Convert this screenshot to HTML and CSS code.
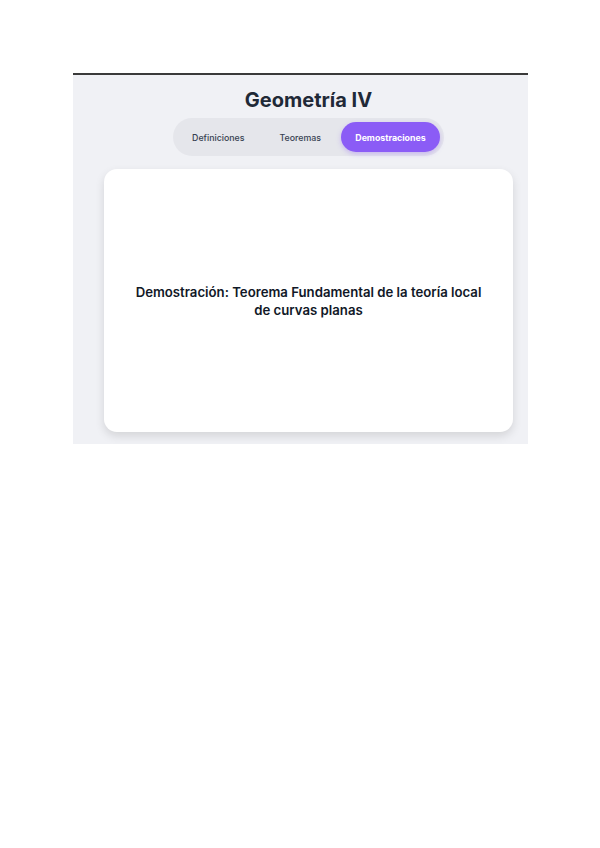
FILE: index.html
```html
<!DOCTYPE html>
<html lang="es">
<head>
  <meta charset="UTF-8">
  <title>Geometría IV</title>
  <link rel="stylesheet" href="styles.css">
</head>
<body>
  <div class="page">
    <div class="frame">
      <!-- HEADER -->
      <h1 class="title">Geometría IV</h1>
      <div class="tabs">
        <button class="tab">Definiciones</button>
        <button class="tab">Teoremas</button>
        <button class="tab tab-active">Demostraciones</button>
      </div>
      <!-- CONTENT -->
      <div class="card">
        <h2>Demostración: Teorema Fundamental de la teoría local de curvas planas</h2>
      </div>
    </div>
  </div>
</body>
</html>
```

FILE: styles.css
```css
*{
  padding: 0;
  margin: 0;
  box-sizing: border-box;
  font-family: Inter, "Noto Sans", sans-serif;
}
body {
  background: #fff;
}
.page {
  padding-top: 73px;
  padding-left: 73px;
}
.frame {
  width: 455px;
  height: 371px;
  border-top: 2px solid #3a3a3a;
  background: #f0f1f5;
  padding: 11px 15px 12px 31px;
  display: flex;
  flex-direction: column;
  align-items: center;
}
.title {
  font-size: 20px;
  line-height: 28px;
  font-weight: 700;
  color: #1f2937;
}
.tabs {
  display: flex;
  align-items: center;
  margin-top: 4px;
  padding: 4px;
  background: #e5e6eb;
  border-radius: 19px;
}
.tab {
  border: none;
  background: none;
  height: 30px;
  padding: 0 15px;
  border-radius: 15px;
  font-size: 8.8px;
  font-weight: 500;
  color: #374151;
  cursor: pointer;
}
.tab:nth-child(2) { padding: 0 20px; }
.tab-active {
  width: 99px;
  padding: 0;
  background: #8b5cf6;
  color: #fff;
  font-weight: 700;
  box-shadow: 0 2px 5px rgba(139, 92, 246, 0.35);
}
.card {
  width: 409px;
  height: 263px;
  margin-top: 13px;
  background: #fff;
  border-radius: 13px;
  box-shadow: 0 4px 10px rgba(0, 0, 0, 0.12);
  display: flex;
  align-items: center;
  justify-content: center;
  padding: 0 26px;
}
.card h2 {
  font-size: 13.2px;
  line-height: 18px;
  font-weight: 600;
  text-align: center;
  color: #111827;
}
```
